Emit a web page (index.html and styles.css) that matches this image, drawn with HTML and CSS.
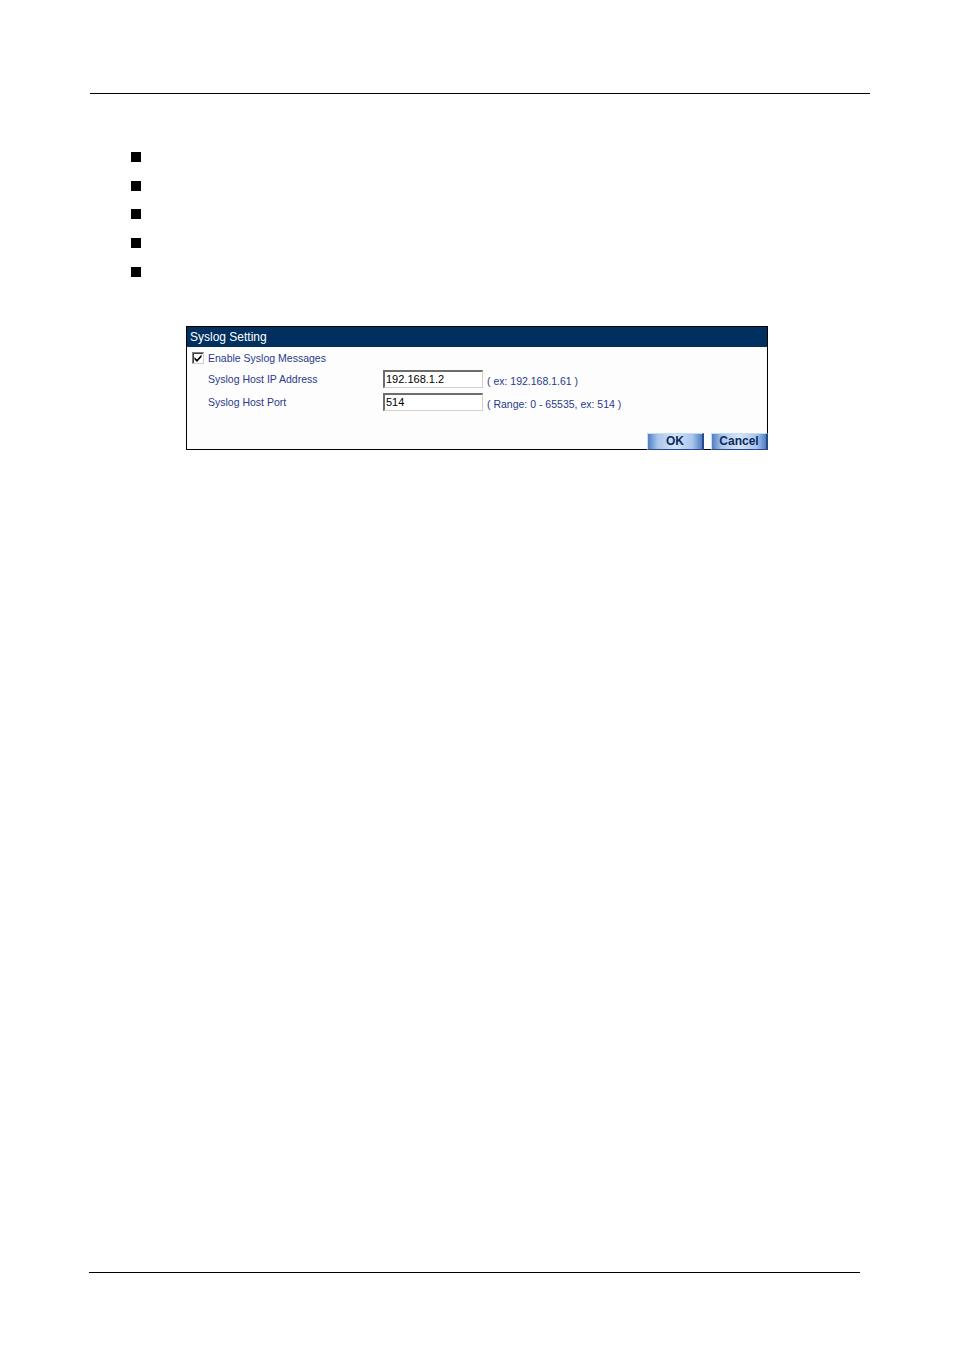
FILE: index.html
```html
<!DOCTYPE html>
<html>
<head>
<meta charset="utf-8">
<link rel="stylesheet" href="styles.css">
</head>
<body>
<div class="page">
  <div class="rule-top"></div>
  <ul class="bullets">
    <li></li><li></li><li></li><li></li><li></li>
  </ul>
  <div class="panel">
    <div class="panel-head">Syslog Setting</div>
    <div class="panel-body">
      <div class="row check-row">
        <span class="checkbox"><svg width="10" height="10" viewBox="0 0 10 10"><path d="M1.5 4 L4 6.5 L8.5 1.5 L8.5 4 L4 9 L1.5 6.5 Z" fill="#000"/></svg></span>
        <span class="lbl">Enable Syslog Messages</span>
      </div>
      <div class="row field-row">
        <span class="lbl name">Syslog Host IP Address</span>
        <span class="input">192.168.1.2</span>
        <span class="hint">( ex: 192.168.1.61 )</span>
      </div>
      <div class="row field-row">
        <span class="lbl name">Syslog Host Port</span>
        <span class="input">514</span>
        <span class="hint">( Range: 0 - 65535, ex: 514 )</span>
      </div>
      <div class="buttons">
        <span class="btn">OK</span>
        <span class="btn">Cancel</span>
      </div>
    </div>
  </div>
  <div class="spacer"></div>
  <div class="rule-bottom"></div>
</div>
</body>
</html>
```
FILE: styles.css
```css
html, body {
  margin: 0;
  padding: 0;
  background: #fff;
}
.page {
  width: 954px;
  height: 1351px;
  display: flex;
  flex-direction: column;
  font-family: "Liberation Sans", Arial, sans-serif;
}
.rule-top {
  margin: 93px 0 0 90px;
  width: 780px;
  height: 1px;
  background: #000;
}
.bullets {
  list-style: none;
  margin: 58px 0 0 131px;
  padding: 0;
  display: flex;
  flex-direction: column;
  gap: 18.7px;
}
.bullets li {
  width: 10px;
  height: 10px;
  background: #000;
}
.panel {
  margin: 49px 0 0 186px;
  width: 580px;
  height: 122px;
  border: 1px solid #000;
  display: flex;
  flex-direction: column;
}
.panel-head {
  height: 20px;
  background: #00305f;
  color: #fff;
  font-size: 12px;
  line-height: 20px;
  padding-left: 3px;
}
.panel-body {
  flex: 1;
  display: flex;
  flex-direction: column;
  padding-left: 5px;
  font-size: 10.5px;
  color: #2a3a8c;
  background: #fdfdfd;
}
.row {
  display: flex;
  align-items: center;
}
.check-row {
  margin-top: 5px;
  height: 12px;
}
.checkbox {
  width: 10px;
  height: 10px;
  border-top: 1px solid #808080;
  border-left: 1px solid #808080;
  border-right: 1px solid #d4d0c8;
  border-bottom: 1px solid #d4d0c8;
  background: #fff;
  display: flex;
  margin-right: 4px;
  box-shadow: inset 1px 1px 0 #404040;
}
.field-row {
  height: 19px;
  margin-top: 6px;
}
.field-row + .field-row { margin-top: 4px; }
.name {
  padding-left: 16px;
  width: 175px;
}
.input {
  width: 96px;
  height: 15px;
  border-top: 2px solid #6d6d6d;
  border-left: 2px solid #6d6d6d;
  border-right: 1px solid #d4d0c8;
  border-bottom: 1px solid #d4d0c8;
  color: #000;
  font-size: 11px;
  line-height: 15px;
  padding-left: 1px;
  background: #fff;
}
.hint {
  margin-left: 4px;
  padding-top: 4px;
}
.buttons {
  margin-top: auto;
  margin-right: -1px;
  margin-bottom: -1px;
  display: flex;
  justify-content: flex-end;
  gap: 7px;
}
.btn {
  width: 54px;
  height: 15px;
  border-style: solid;
  border-color: #c8dcf8 #2a4a86 #2a4a86 #c8dcf8;
  border-width: 1px 2px 1px 1px;
  background: linear-gradient(to right, #4f7fc4 0%, #a9c6ec 18%, #d4e4f8 50%, #a9c6ec 82%, #4f7fc4 100%);
  color: #0d2a5c;
  font-weight: bold;
  font-size: 12px;
  line-height: 15px;
  text-align: center;
}
.spacer { flex: 1; }
.rule-bottom {
  margin: 0 0 78px 89px;
  width: 771px;
  height: 1px;
  background: #000;
}
```
